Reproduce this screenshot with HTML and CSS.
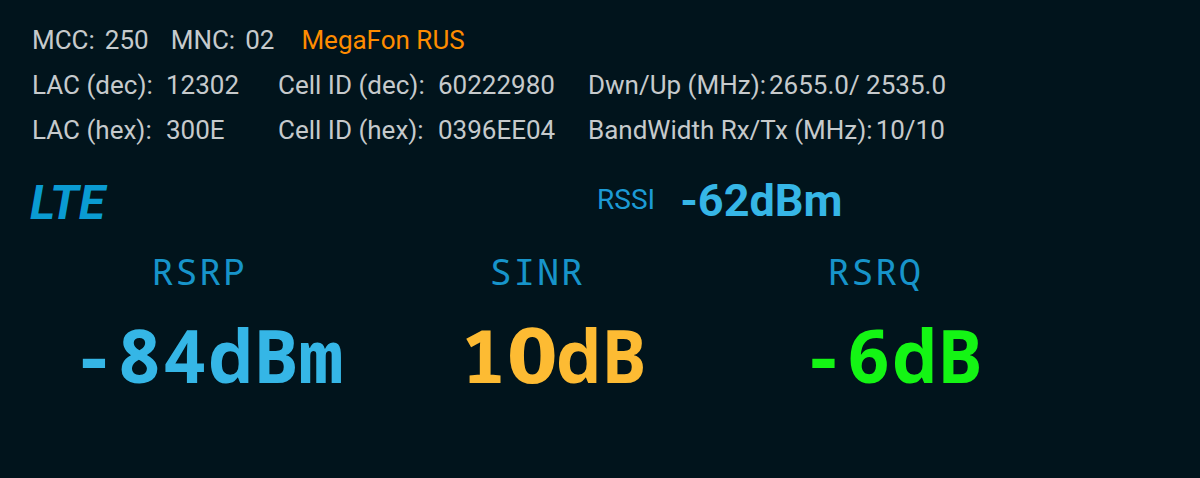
FILE: index.html
```html
<!DOCTYPE html>
<html lang="en">
<head>
<meta charset="utf-8">
<title>LTE Cell Info</title>
<link rel="stylesheet" href="styles.css">
</head>
<body>
<main class="screen">
  <section class="info">
    <div class="row-top">
      <span class="k k-mcc">MCC:</span><span class="v v-mcc">250</span>
      <span class="k k-mnc">MNC:</span><span class="v v-mnc">02</span>
      <span class="operator">MegaFon RUS</span>
    </div>
    <div class="grid">
      <span class="k">LAC (dec):</span><span class="v">12302</span>
      <span class="k">Cell ID (dec):</span><span class="v">60222980</span>
      <span class="pair"><span class="k">Dwn/Up (MHz):</span><span class="v">2655.0/ 2535.0</span></span>
      <span class="k">LAC (hex):</span><span class="v">300E</span>
      <span class="k">Cell ID (hex):</span><span class="v">0396EE04</span>
      <span class="pair"><span class="k">BandWidth Rx/Tx (MHz):</span><span class="v">10/10</span></span>
    </div>
  </section>
  <section class="head">
    <span class="tech">LTE</span>
    <span class="rssi-label">RSSI</span>
    <span class="rssi-value">-62dBm</span>
  </section>
  <section class="metrics">
    <div class="metric">
      <div class="m-label">RSRP</div>
      <div class="m-value m-first blue">-84dBm</div>
    </div>
    <div class="metric">
      <div class="m-label">SINR</div>
      <div class="m-value amber">1<span class="zero">0</span>dB</div>
    </div>
    <div class="metric">
      <div class="m-label">RSRQ</div>
      <div class="m-value green">-6dB</div>
    </div>
  </section>
</main>
</body>
</html>
```

FILE: styles.css
```css
html, body {
  margin: 0;
  padding: 0;
  background: #01141c;
}
body {
  width: 1200px;
  height: 478px;
  overflow: hidden;
  font-family: Roboto, "Liberation Sans", sans-serif;
}
.screen {
  padding: 18px 0 0 32px;
}
.info {
  font-size: 26px;
  line-height: 45px;
  color: #c6cacc;
}
.row-top {
  display: flex;
}
.k-mcc { margin-right: 10px; }
.v-mcc { margin-right: 22px; }
.k-mnc { margin-right: 10px; }
.v-mnc { margin-right: 27px; }
.operator { color: #ff8c00; }

.grid {
  display: grid;
  grid-template-columns: 134px 112px 160px 150px auto;
}
.pair {
  display: flex;
  gap: 3px;
}

.head {
  display: flex;
  align-items: flex-end;
  margin-top: 25px;
  margin-left: -2px;
}
.tech {
  width: 567px;
  font-size: 48px;
  line-height: 42px;
  font-weight: 700;
  font-style: italic;
  color: #0a9bd2;
}
.rssi-label {
  font-size: 28px;
  line-height: 28px;
  color: #1c9ad5;
  margin-right: 25px;
  padding-bottom: 10px;
}
.rssi-value {
  font-size: 45px;
  line-height: 46px;
  font-weight: 700;
  color: #36b6e6;
}

.metrics {
  display: grid;
  grid-template-columns: 338px 338px 338px;
  margin-left: -3px;
  margin-top: 27px;
  font-family: "Noto Sans Mono", "Noto Mono", "Droid Sans Mono", "DejaVu Sans Mono", monospace;
}
.metric {
  display: flex;
  flex-direction: column;
  align-items: center;
}
.m-label {
  font-size: 37px;
  line-height: 40px;
  letter-spacing: 1.5px;
  padding-left: 2px;
  color: #1794ca;
}
.m-value {
  font-size: 74px;
  line-height: 90px;
  font-weight: 700;
  letter-spacing: 1px;
  margin-top: 19px;
  padding-left: 36px;
}
.m-first {
  padding-left: 20px;
}
.zero {
  font-family: "DejaVu Sans", sans-serif;
  letter-spacing: -2px;
}
.blue { color: #35b6e6; }
.amber { color: #fdbb33; }
.green { color: #14f514; }
```
